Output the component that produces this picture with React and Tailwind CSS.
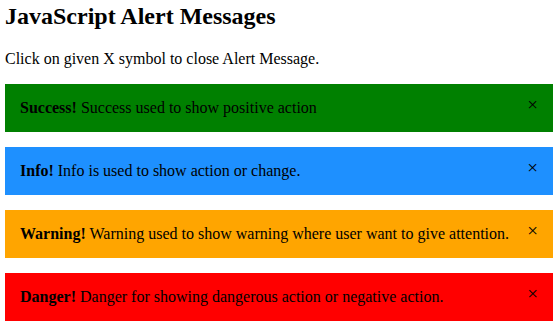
export default function App() {
  const alerts = [
    { bg: "bg-[#008000]", title: "Success!", text: "Success used to show positive action" },
    { bg: "bg-[#1e90ff]", title: "Info!", text: "Info is used to show action or change." },
    { bg: "bg-[#ffa500]", title: "Warning!", text: "Warning used to show warning where user want to give attention." },
    { bg: "bg-[#ff0000]", title: "Danger!", text: "Danger for showing dangerous action or negative action." },
  ];
  return (
    <div className="w-[557px] h-[327px] bg-white text-black pl-[5px] pt-[2px]" style={{ fontFamily: '"Liberation Serif", "Times New Roman", serif' }}>
      <h2 className="text-[24px] leading-[28px] font-bold">JavaScript Alert Messages</h2>
      <p className="text-[16px] leading-[18px] mt-[20px]">Click on given X symbol to close Alert Message.</p>
      <div className="mt-[16px] flex flex-col gap-[15px] w-[548px]">
        {alerts.map((a) => (
          <div key={a.title} className={`${a.bg} h-[48px] px-[15px] py-[15px] flex items-start justify-between text-[16px] leading-[18px]`}>
            <div>
              <b>{a.title}</b> {a.text}
            </div>
            <span className="text-[19px] leading-[20px] mt-[-4px] ml-[15px] cursor-pointer">×</span>
          </div>
        ))}
      </div>
    </div>
  );
}
